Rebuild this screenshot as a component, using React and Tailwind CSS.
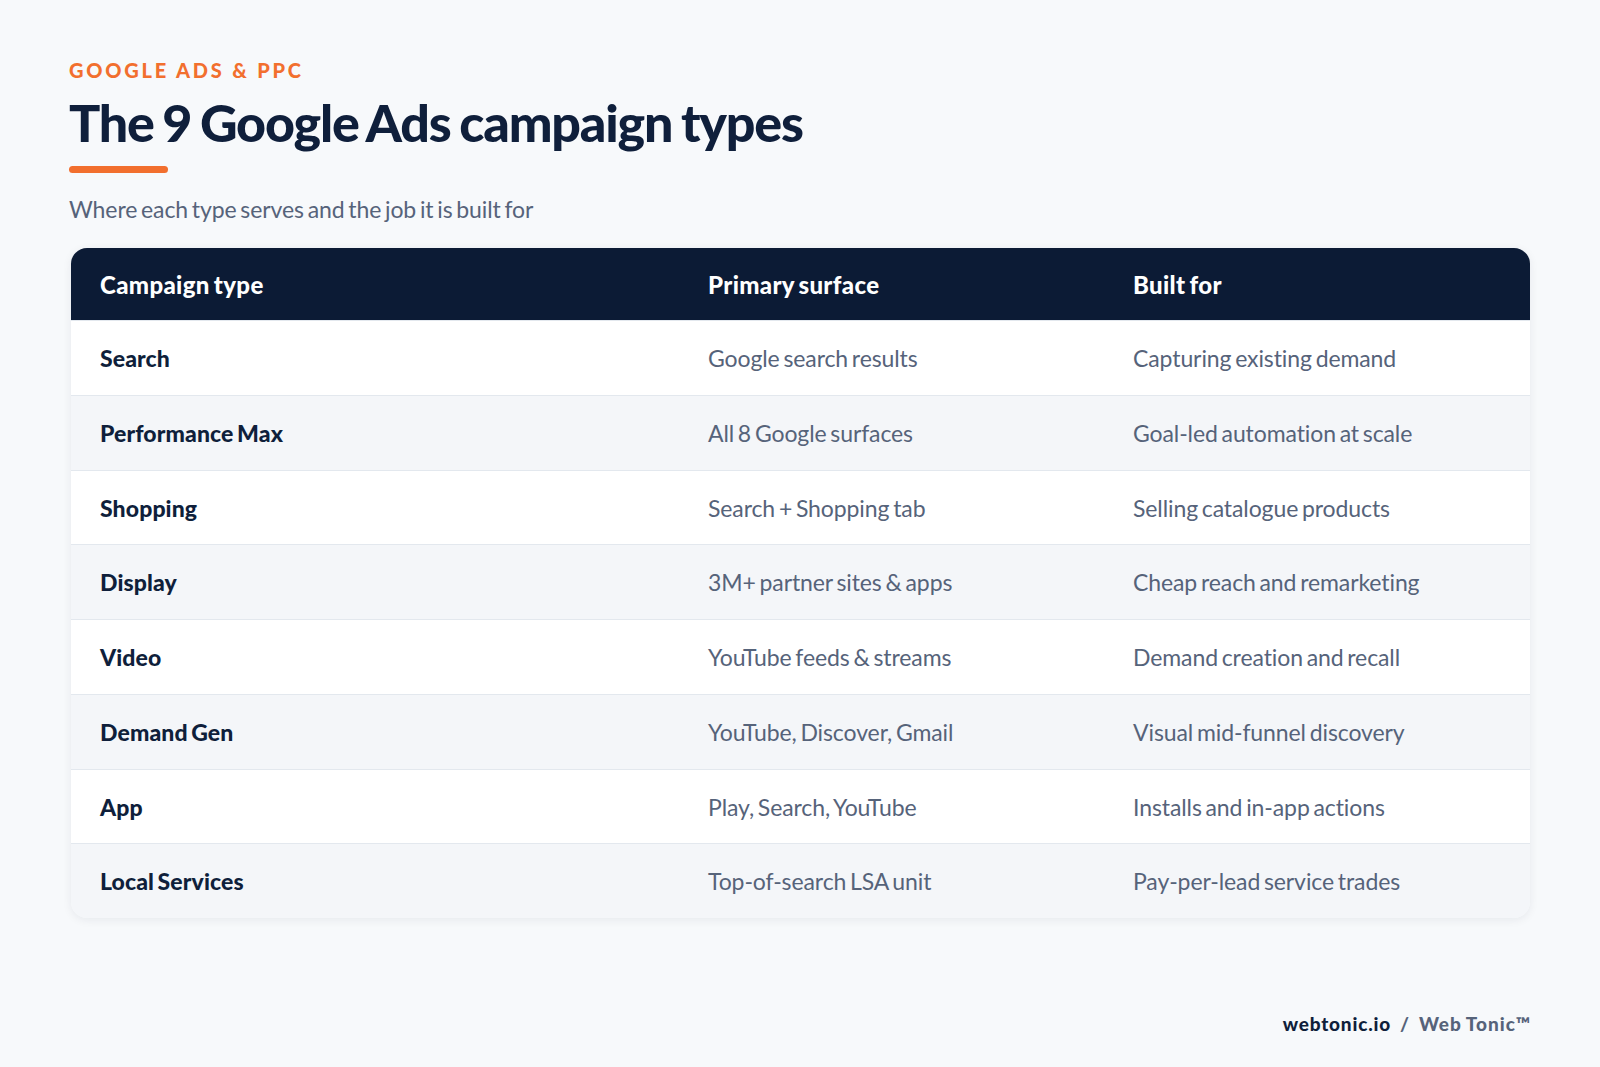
const rows = [
  ['Search', 'Google search results', 'Capturing existing demand'],
  ['Performance Max', 'All 8 Google surfaces', 'Goal-led automation at scale'],
  ['Shopping', 'Search + Shopping tab', 'Selling catalogue products'],
  ['Display', '3M+ partner sites & apps', 'Cheap reach and remarketing'],
  ['Video', 'YouTube feeds & streams', 'Demand creation and recall'],
  ['Demand Gen', 'YouTube, Discover, Gmail', 'Visual mid-funnel discovery'],
  ['App', 'Play, Search, YouTube', 'Installs and in-app actions'],
  ['Local Services', 'Top-of-search LSA unit', 'Pay-per-lead service trades'],
];

export default function App() {
  return (
    <div className="min-h-[1067px] bg-[#f7f9fb] px-[69px] pt-[59px] font-['Lato',sans-serif]">
      <p className="text-[20px] leading-[22px] font-black tracking-[2.8px] text-[#f26f2e]">GOOGLE ADS &amp; PPC</p>
      <h1 className="mt-[10px] text-[52px] leading-[62px] font-black tracking-[-1.2px] [word-spacing:-2.5px] text-[#0f1f3b]">The 9 Google Ads campaign types</h1>
      <div className="mt-[13px] h-[7px] w-[99px] rounded-full bg-[#f26f2e]" />
      <p className="mt-[20px] text-[23px] leading-[32px] tracking-[-0.1px] [word-spacing:-2px] text-[#56637a]">Where each type serves and the job it is built for</p>

      <div className="mt-[23px] ml-[2px] w-[1459px] overflow-hidden rounded-[16px] shadow-[0_2px_10px_rgba(15,31,59,0.07)]">
        <div className="grid h-[72px] grid-cols-[608px_425px_1fr] items-center bg-[#0c1b35] px-[29px] pt-[1px] text-[24px] font-black tracking-[0.35px] [word-spacing:-2px] text-white">
          <span>Campaign type</span>
          <span>Primary surface</span>
          <span>Built for</span>
        </div>
        {rows.map((row, i) => (
          <div
            key={row[0]}
            className={`grid h-[74.75px] grid-cols-[608px_425px_1fr] items-center border-t border-[#e3e8ee] px-[29px] pt-[1px] text-[23px] [word-spacing:-2px] first-of-type:border-t-0 ${i % 2 ? 'bg-[#f4f6f9]' : 'bg-white'}`}
          >
            <span className="font-black tracking-[0.1px] text-[#0f1f3b]">{row[0]}</span>
            <span className="tracking-[-0.1px] text-[#56637a]">{row[1]}</span>
            <span className="tracking-[-0.1px] text-[#56637a]">{row[2]}</span>
          </div>
        ))}
      </div>

      <div className="mt-[92px] ml-[2px] flex w-[1460px] justify-end text-[19px] leading-[28px] font-black tracking-[1px] [word-spacing:-1px]">
        <span className="tracking-[0.8px] text-[#0f1f3b]">webtonic.io</span>
        <span className="mx-[9px] text-[#56637a]">/</span>
        <span className="text-[#56637a]">Web Tonic™</span>
      </div>
    </div>
  );
}
